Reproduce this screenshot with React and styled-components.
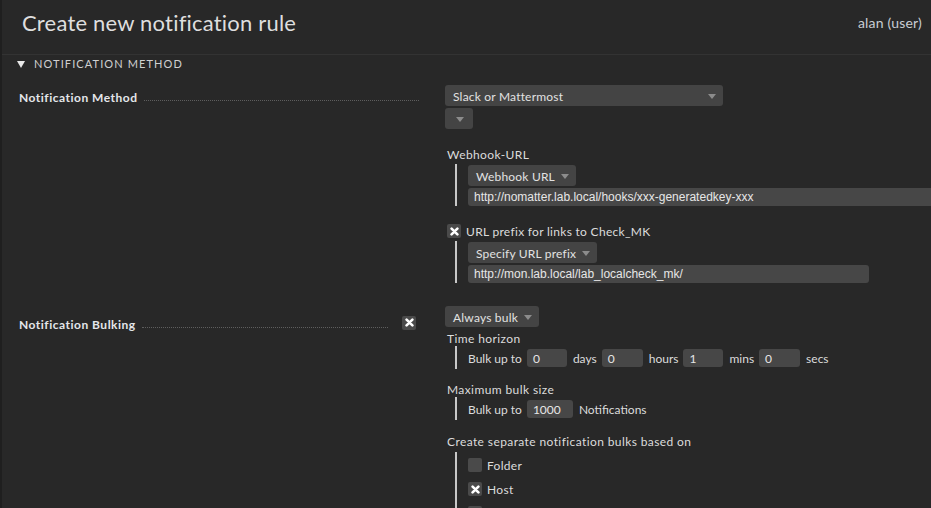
import React from "react";
import styled, { createGlobalStyle } from "styled-components";

const GlobalStyle = createGlobalStyle`
  html, body {
    margin: 0;
    padding: 0;
    background: #282828;
    overflow: hidden;
  }
  body {
    font-family: Lato, "Open Sans", sans-serif;
    font-size: 12px;
    color: #dcdcdc;
  }
`;

const Page = styled.div`
  width: 931px;
  height: 508px;
  background: #282828;
  border-left: 2px solid #1f1f1f;
  box-sizing: border-box;
  overflow: hidden;
`;

const TopBar = styled.div`
  height: 54px;
  display: flex;
  align-items: center;
  justify-content: space-between;
  padding: 0 9px 0 20px;
  border-bottom: 1px solid #333;
`;

const Title = styled.h1`
  margin: 0;
  font-size: 22px;
  font-weight: 400;
  color: #dedede;
  letter-spacing: 0.2px;
  padding-bottom: 10px;
`;

const User = styled.span`
  font-size: 14px;
  color: #c9cdd3;
  letter-spacing: 0.2px;
  padding-bottom: 10px;
`;

const SectionHead = styled.div`
  display: flex;
  align-items: center;
  gap: 9px;
  padding: 1px 0 0 15px;
  height: 15px;
  font-size: 11px;
  letter-spacing: 1.1px;
  color: #d0d0d0;
`;

const Tri = styled.span`
  width: 0;
  height: 0;
  border-left: 4px solid transparent;
  border-right: 4px solid transparent;
  border-top: 7px solid #e8e8e8;
  margin-top: 2px;
`;

const Row = styled.div`
  display: grid;
  grid-template-columns: 443px 1fr;
  margin-top: ${(p) => p.$top}px;
`;

const LabelCell = styled.div`
  display: flex;
  align-items: flex-start;
  padding: ${(p) => p.$pad}px ${(p) => p.$right}px 0 17px;
  box-sizing: border-box;
`;

const Label = styled.div`
  flex: 1;
  display: flex;
  align-items: baseline;
  font-weight: 700;
  color: #e4e6ea;
  letter-spacing: 0.5px;
  margin-right: ${(p) => p.$gap || 0}px;
`;

const Dots = styled.span`
  flex: 1;
  margin-left: 6px;
  border-bottom: 1px dotted #5e5e5e;
  transform: translateY(-1px);
`;

const Value = styled.div`
  display: flex;
  flex-direction: column;
  align-items: flex-start;
`;

const Select = styled.div`
  height: 21px;
  width: ${(p) => (p.$w ? `${p.$w}px` : "auto")};
  box-sizing: border-box;
  background: #444;
  border-radius: 3px;
  display: flex;
  align-items: center;
  justify-content: space-between;
  gap: 6px;
  padding: 1px 7px 0 8px;
  margin-top: ${(p) => p.$top || 0}px;
  color: #e2e2e2;
  letter-spacing: 0.2px;
`;

const Arrow = styled.span`
  width: 0;
  height: 0;
  border-left: 4px solid transparent;
  border-right: 4px solid transparent;
  border-top: 5px solid #8c8c8c;
  margin-left: ${(p) => p.$ml || 0}px;
`;

const Caption = styled.div`
  margin: ${(p) => p.$top}px 0 0 2px;
  line-height: 15px;
  letter-spacing: 0.4px;
`;

const Nested = styled.div`
  margin: ${(p) => p.$top || 0}px 0 0 10px;
  padding: ${(p) => p.$pad || 1}px 0 ${(p) => p.$padB || 0}px 11px;
  border-left: 2px solid #c8c8c8;
  display: flex;
  flex-direction: column;
  align-items: flex-start;
  gap: ${(p) => p.$gap || 2}px;
  align-self: stretch;
`;

const UrlInput = styled.div`
  height: 18px;
  width: ${(p) => p.$w}px;
  box-sizing: border-box;
  background: #474747;
  border-radius: 3px;
  padding: 0 6px;
  display: flex;
  align-items: center;
  font-family: "Liberation Sans", Arial, sans-serif;
  font-size: 12px;
  color: #e6e6e6;
`;

const Line = styled.div`
  display: flex;
  align-items: center;
  gap: 5px;
  letter-spacing: 0;
`;

const NumInput = styled.div`
  height: 18px;
  width: ${(p) => p.$w}px;
  box-sizing: border-box;
  background: #474747;
  border-radius: 3px;
  padding: 1px 6px 0;
  margin-right: 1px;
  display: flex;
  align-items: center;
  color: #e6e6e6;
`;

const Box = styled.span`
  width: 14px;
  height: 14px;
  flex: none;
  border-radius: 2px;
  background: #4a4a4a;
  display: inline-flex;
  align-items: center;
  justify-content: center;
`;

const CheckLine = styled.div`
  display: flex;
  align-items: center;
  gap: 5px;
  height: 14px;
  margin: ${(p) => p.$top}px 0 0 ${(p) => p.$left || 0}px;
  letter-spacing: 0.3px;
`;

const CheckSlot = styled.span`
  margin-top: -2px;
`;

function Cross() {
  return (
    <svg width="9" height="9" viewBox="0 0 9 9">
      <path d="M1.6 1.6 L7.4 7.4 M7.4 1.6 L1.6 7.4" stroke="#fff" strokeWidth="2.6" strokeLinecap="round" />
    </svg>
  );
}

function Check({ on }) {
  return <Box>{on && <Cross />}</Box>;
}

export default function App() {
  return (
    <Page>
      <GlobalStyle />
      <TopBar>
        <Title>Create new notification rule</Title>
        <User>alan (user)</User>
      </TopBar>

      <SectionHead>
        <Tri />
        NOTIFICATION METHOD
      </SectionHead>

      <Row $top={14}>
        <LabelCell $pad={5} $right={26}>
          <Label>
            Notification Method
            <Dots />
          </Label>
        </LabelCell>
        <Value>
          <Select $w={278}>
            Slack or Mattermost
            <Arrow />
          </Select>
          <Select $w={28} $top={2}>
            <Arrow $ml={3} />
          </Select>

          <Caption $top={18}>Webhook-URL</Caption>
          <Nested $top={2}>
            <Select>
              Webhook URL
              <Arrow />
            </Select>
            <UrlInput $w={470}>http://nomatter.lab.local/hooks/xxx-generatedkey-xxx</UrlInput>
          </Nested>

          <CheckLine $top={18} $left={2}>
            <Check on />
            URL prefix for links to Check_MK
          </CheckLine>
          <Nested $top={3}>
            <Select>
              Specify URL prefix
              <Arrow />
            </Select>
            <UrlInput $w={401}>http://mon.lab.local/lab_localcheck_mk/</UrlInput>
          </Nested>
        </Value>
      </Row>

      <Row $top={23}>
        <LabelCell $pad={11} $right={29}>
          <Label $gap={14}>
            Notification Bulking
            <Dots />
          </Label>
          <CheckSlot>
            <Check on />
          </CheckSlot>
        </LabelCell>
        <Value>
          <Select>
            Always bulk
            <Arrow />
          </Select>

          <Caption $top={4}>Time horizon</Caption>
          <Nested $top={0} $pad={3} $padB={2}>
            <Line>
              Bulk up to <NumInput $w={40}>0</NumInput>
              days <NumInput $w={41}>0</NumInput>
              hours <NumInput $w={40}>1</NumInput>
              mins <NumInput $w={41}>0</NumInput>
              secs
            </Line>
          </Nested>

          <Caption $top={13}>Maximum bulk size</Caption>
          <Nested $top={0} $pad={3} $padB={2}>
            <Line>
              Bulk up to <NumInput $w={46}>1000</NumInput>
              Notifications
            </Line>
          </Nested>

          <Caption $top={14}>Create separate notification bulks based on</Caption>
          <Nested $top={3} $pad={6} $gap={10}>
            <CheckLine $top={0}>
              <Check />
              Folder
            </CheckLine>
            <CheckLine $top={0}>
              <Check on />
              Host
            </CheckLine>
            <CheckLine $top={0}>
              <Check />
              Service
            </CheckLine>
          </Nested>
        </Value>
      </Row>
    </Page>
  );
}
